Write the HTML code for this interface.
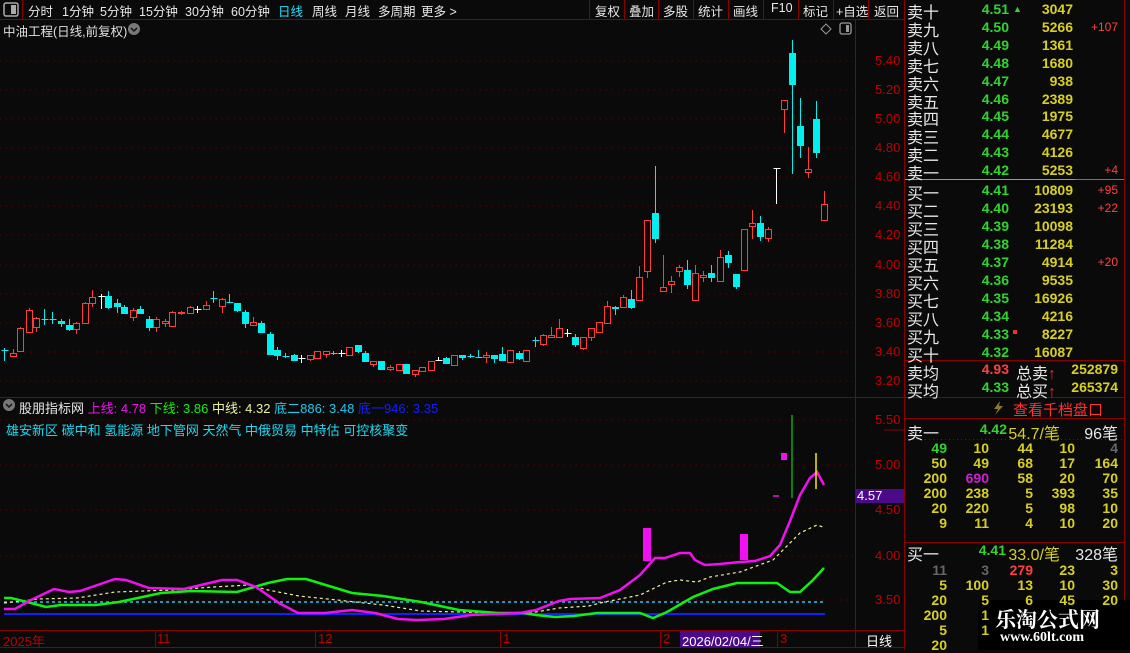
<!DOCTYPE html>
<html><head><meta charset="utf-8">
<style>
*{margin:0;padding:0;box-sizing:border-box}
body{width:1130px;height:650px;background:#0a0a0a;overflow:hidden;position:relative;font-family:"Liberation Sans","Noto Sans CJK SC",sans-serif;color:#ddd}
.a{position:absolute;white-space:nowrap}
.tb{font-size:12.5px;color:#e8e8e8;top:1px}
.bk{font-size:14px;font-weight:bold}
.lab{font-size:16px;color:#e8e8e8}
.g{color:#2fd52f}.y{color:#d8d020}.rd{color:#ff4040}.w{color:#e8e8e8}
.ch{font-size:12px;color:#ff4040}
</style></head><body>
<svg class="a" style="left:0;top:0" width="1130" height="650">
<g stroke="#8a0000" stroke-width="1" fill="none">
<line x1="0" y1="19.5" x2="904" y2="19.5"/>
<line x1="22.5" y1="0" x2="22.5" y2="19"/>
<line x1="589.5" y1="0" x2="589.5" y2="19"/><line x1="624.5" y1="0" x2="624.5" y2="19"/><line x1="658.5" y1="0" x2="658.5" y2="19"/><line x1="693.5" y1="0" x2="693.5" y2="19"/><line x1="728.5" y1="0" x2="728.5" y2="19"/><line x1="763.5" y1="0" x2="763.5" y2="19"/><line x1="798.5" y1="0" x2="798.5" y2="19"/><line x1="833.5" y1="0" x2="833.5" y2="19"/><line x1="868.5" y1="0" x2="868.5" y2="19"/>
<line x1="904.5" y1="0" x2="904.5" y2="650"/>
<line x1="855.5" y1="19" x2="855.5" y2="648"/>
<line x1="0" y1="397.5" x2="904" y2="397.5"/>
<line x1="0" y1="630.5" x2="904" y2="630.5"/>
<line x1="0" y1="647.5" x2="904" y2="647.5"/>
<line x1="1124.5" y1="0" x2="1124.5" y2="650"/>
<line x1="905" y1="360.5" x2="1124" y2="360.5"/>
<line x1="905" y1="397.5" x2="1124" y2="397.5"/>
<line x1="905" y1="418.5" x2="1124" y2="418.5"/>
<line x1="905" y1="542.5" x2="1124" y2="542.5"/>
<line x1="155.5" y1="631" x2="155.5" y2="647"/><line x1="315.5" y1="631" x2="315.5" y2="647"/><line x1="500.5" y1="631" x2="500.5" y2="647"/><line x1="660.5" y1="631" x2="660.5" y2="647"/><line x1="777.5" y1="631" x2="777.5" y2="647"/>
</g>
<line x1="905" y1="179.5" x2="1075" y2="179.5" stroke="#d09030"/>
<line x1="1075" y1="179.5" x2="1124" y2="179.5" stroke="#4080c0"/>
<g stroke="#6a0000" stroke-dasharray="1 5">
<line x1="0" y1="61" x2="855" y2="61"/><line x1="0" y1="90" x2="855" y2="90"/><line x1="0" y1="119" x2="855" y2="119"/><line x1="0" y1="148" x2="855" y2="148"/><line x1="0" y1="177" x2="855" y2="177"/><line x1="0" y1="206" x2="855" y2="206"/><line x1="0" y1="235" x2="855" y2="235"/><line x1="0" y1="265" x2="855" y2="265"/><line x1="0" y1="294" x2="855" y2="294"/><line x1="0" y1="323" x2="855" y2="323"/><line x1="0" y1="352" x2="855" y2="352"/><line x1="0" y1="381" x2="855" y2="381"/>
<line x1="0" y1="420" x2="855" y2="420"/><line x1="0" y1="465" x2="855" y2="465"/><line x1="0" y1="510" x2="855" y2="510"/><line x1="0" y1="556" x2="855" y2="556"/><line x1="0" y1="600" x2="855" y2="600"/>
</g>
<line x1="884" y1="430" x2="904" y2="430" stroke="#8a0000"/>
<g id="cd"></g>
<line x1="4" y1="614" x2="825" y2="614" stroke="#1020ff" stroke-width="2"/>
<line x1="4" y1="602" x2="825" y2="602" stroke="#20c8f0" stroke-width="1.5" stroke-dasharray="3 3"/>
<polyline fill="none" stroke="#f0f0a0" stroke-width="1.2" stroke-dasharray="3 3" points="4,603 38,599 77,598 115,592 172,590 214,587 249,585 268,590 299,596 337,600 383,605 421,611 498,613 536,612 559,608 589,606 600,603 640,595 667,582 680,580 697,582 710,577 740,572 773,560 800,533 817,525 823,527"/>
<polyline fill="none" stroke="#10f010" stroke-width="2.5" points="4,598 11,598 31,603 46,607 61,605 96,605 119,602 161,593 191,591 237,592 268,583 287,579 306,579 329,586 352,593 383,596 421,602 459,610 498,613 524,613 536,615 555,617 574,616 597,613 640,613 653,618 667,612 693,597 713,589 737,583 777,583 790,592 800,592 813,580 824,568"/>
<polyline fill="none" stroke="#f010f0" stroke-width="2.5" points="4,609 15,609 31,600 54,589 69,592 80,591 115,579 126,580 149,588 184,589 222,580 237,580 256,587 279,603 298,613 325,613 352,610 375,613 398,619 417,620 444,619 471,615 520,613 536,610 559,601 570,599 600,598 620,590 640,575 655,558 665,558 680,553 690,553 695,560 705,565 720,564 740,562 755,561 770,556 780,545 790,521 800,495 810,478 817,472 824,485"/>
<rect x="643" y="528" width="8" height="33" fill="#f010f0"/>
<rect x="740" y="534" width="8" height="26" fill="#f010f0"/>
<rect x="781" y="453" width="6" height="7" fill="#f010f0"/>
<line x1="773" y1="496" x2="779" y2="496" stroke="#f010f0" stroke-width="1.5"/>
<line x1="792" y1="415" x2="792" y2="498" stroke="#10f010"/>
<line x1="816" y1="453" x2="816" y2="489" stroke="#f0f000" stroke-width="1.5"/>
<rect x="856" y="489" width="48" height="14" fill="#4a0a8a"/>
<rect x="680" y="631" width="80" height="16" fill="#4a0a8a"/>
<rect x="4" y="3" width="14" height="13" rx="2" fill="none" stroke="#aaa" stroke-width="1.5"/><rect x="11" y="5" width="5" height="9" fill="#aaa"/>
<rect x="840" y="23" width="11" height="11" rx="2" fill="none" stroke="#999" stroke-width="1.3"/><rect x="846" y="25" width="3" height="7" fill="#999"/>
<path d="M826 24 L831 29 L826 34 L821 29 Z" fill="none" stroke="#999"/>
<circle cx="134" cy="29" r="6" fill="#777"/><path d="M131 28 L134 31 L137 28" stroke="#111" fill="none" stroke-width="1.5"/>
<circle cx="9" cy="405" r="6" fill="#777"/><path d="M6 404 L9 407 L12 404" stroke="#111" fill="none" stroke-width="1.5"/>
<path d="M1000 401 L994 409 L998 409 L995 415 L1003 406 L999 406 Z" fill="#8a7a30"/>
<line x1="905" y1="439.5" x2="1124" y2="439.5" stroke="#7a1010" stroke-dasharray="1 3"/>
<rect x="978" y="600" width="152" height="50" fill="#000"/>
</svg>

<div class="a tb" style="left:28px">分时</div><div class="a tb" style="left:62px">1分钟</div><div class="a tb" style="left:100px">5分钟</div><div class="a tb" style="left:139px">15分钟</div><div class="a tb" style="left:185px">30分钟</div><div class="a tb" style="left:231px">60分钟</div><div class="a tb" style="left:278px;color:#20e0ff">日线</div><div class="a tb" style="left:312px">周线</div><div class="a tb" style="left:345px">月线</div><div class="a tb" style="left:378px">多周期</div><div class="a tb" style="left:421px">更多 &gt;</div>
<div class="a tb" style="left:595px">复权</div><div class="a tb" style="left:629px">叠加</div><div class="a tb" style="left:663px">多股</div><div class="a tb" style="left:698px">统计</div><div class="a tb" style="left:733px">画线</div><div class="a tb" style="left:771px">F10</div><div class="a tb" style="left:803px">标记</div><div class="a tb" style="left:836px">+自选</div><div class="a tb" style="left:874px">返回</div>
<div class="a" style="left:3px;top:21px;font-size:12.5px;color:#e0e0e0">中油工程(日线,前复权)</div>

<div id="ax" class="a" style="left:875px;top:0;font-size:13px;color:#c00000"></div>
<div class="a" style="left:857px;top:488px;font-size:13px;color:#fff">4.57</div>

<div class="a" style="left:19px;top:398px;font-size:13px"><span class="w">股朋指标网</span> <span style="color:#f010f0">上线: 4.78</span> <span style="color:#10f010">下线: 3.86</span> <span style="color:#f0f0a0">中线: 4.32</span> <span style="color:#20c8f0">底二886: 3.48</span> <span style="color:#1020ff">底一946: 3.35</span></div>
<div class="a" style="left:6px;top:420px;font-size:13px;color:#20d8f0">雄安新区 碳中和 氢能源 地下管网 天然气 中俄贸易 中特估 可控核聚变</div>

<div class="a" style="left:3px;top:631px;font-size:13px;color:#c00000">2025年</div>
<div class="a" style="left:157px;top:631px;font-size:13px;color:#c00000">11</div>
<div class="a" style="left:318px;top:631px;font-size:13px;color:#c00000">12</div>
<div class="a" style="left:503px;top:631px;font-size:13px;color:#c00000">1</div>
<div class="a" style="left:663px;top:631px;font-size:13px;color:#c00000">2</div>
<div class="a" style="left:682px;top:631px;font-size:13px;color:#fff">2026/02/04/三</div>
<div class="a" style="left:780px;top:631px;font-size:13px;color:#c00000">3</div>
<div class="a" style="left:866px;top:631px;font-size:13px;color:#fff">日线</div>

<div id="bk"></div>
<div class="a" style="left:1013px;top:399px;font-size:15px;color:#ff3030">查看千档盘口</div>
<div class="a" style="left:995px;top:604px;font-size:21px;font-weight:bold;color:#fff;font-family:'Liberation Serif','Noto Serif CJK SC',serif">乐淘公式网</div>
<div class="a" style="left:1000px;top:630px;font-size:14px;font-weight:bold;color:#fff;font-family:'Liberation Serif',serif">www.60lt.com</div>

<script>
var ns="http://www.w3.org/2000/svg",cd=document.getElementById('cd');
function el(t,a){var e=document.createElementNS(ns,t);for(var k in a)e.setAttribute(k,a[k]);cd.appendChild(e);}
var A=[[4,350,350,348,361,'c'],[12,353,356,349,357,'r'],[19,328,351,327,351,'r'],[27,310,332,308,332,'r'],[34,318,327,317,332,'r'],[41,319,319,309,325,'c'],[49,319,319,312,324,'c'],[57,321,323,319,327,'c'],[64,325,329,319,331,'c'],[71,323,329,322,334,'r'],[79,303,323,302,323,'r'],[86,297,303,290,307,'r'],[94,296,296,294,309,'w'],[101,296,307,291,309,'c'],[109,303,306,299,313,'c'],[116,307,313,305,314,'c'],[124,310,317,308,321,'r'],[131,309,313,306,314,'c'],[139,319,327,316,331,'c'],[146,319,327,317,332,'r'],[154,321,323,319,327,'r'],[161,312,326,311,327,'r'],[169,312,313,311,315,'r'],[177,307,313,306,313,'r'],[184,309,309,306,313,'w'],[192,305,309,301,310,'r'],[199,298,298,291,303,'c'],[207,299,306,298,313,'r'],[214,302,302,294,303,'c'],[221,303,310,303,312,'c'],[229,312,323,310,328,'c'],[236,322,325,317,326,'r'],[244,323,332,321,333,'c'],[252,334,354,332,354,'c'],[259,350,355,347,360,'c'],[266,356,356,353,358,'c'],[274,355,360,354,360,'c'],[281,358,358,355,363,'w'],[289,355,359,355,361,'r'],[296,351,358,351,358,'r'],[304,351,354,351,358,'r'],[311,353,353,351,355,'c'],[318,353,353,350,357,'w'],[326,347,355,347,355,'r'],[334,345,351,345,353,'c'],[341,353,361,351,361,'c'],[348,361,364,361,367,'r'],[356,361,369,361,369,'c'],[364,367,369,365,371,'r'],[372,364,370,364,370,'r'],[379,364,373,364,374,'c'],[387,370,374,370,377,'r'],[394,367,371,367,371,'r'],[402,361,370,361,370,'r'],[409,360,360,357,361,'w'],[416,358,363,357,364,'c'],[424,355,365,355,365,'r'],[431,355,357,355,360,'c'],[439,356,356,354,358,'c'],[446,357,357,350,358,'c'],[454,355,357,352,363,'r'],[461,355,358,355,363,'c'],[469,354,360,347,361,'c'],[476,350,362,350,362,'r'],[484,353,358,351,360,'c'],[491,350,361,350,361,'r']];
A.forEach(function(c){c[0]=Math.round(c[0]*1.0714);});
var B=[[535,340,340,337,347,'c'],[543,335,344,334,346,'r'],[551,335,337,327,338,'r'],[559,328,337,319,337,'r'],[567,333,333,329,337,'w'],[575,337,344,334,347,'c'],[583,337,348,337,350,'r'],[591,328,337,328,341,'r'],[599,322,332,322,332,'r'],[607,306,323,301,323,'r'],[615,307,308,306,315,'c'],[623,297,307,295,307,'r'],[631,299,307,290,309,'c'],[639,277,300,266,300,'r'],[647,220,271,220,278,'r'],[655,213,238,166,243,'c'],[663,287,291,255,291,'r'],[671,281,284,276,293,'r'],[679,267,271,265,277,'r'],[687,270,284,260,289,'c'],[695,273,300,265,301,'r'],[703,275,277,271,282,'r'],[711,273,277,265,282,'c'],[720,257,281,250,281,'r'],[728,255,262,251,268,'c'],[736,274,286,274,289,'c'],[744,229,270,229,270,'r'],[752,223,226,210,239,'r'],[760,223,236,216,241,'c'],[768,229,238,227,242,'r'],[776,168,168,168,204,'w'],[784,100,109,100,133,'r'],[792,53,84,40,174,'c'],[800,126,145,98,158,'c'],[808,169,172,147,178,'r'],[816,119,152,101,158,'c'],[824,204,220,191,220,'r']];
A.concat(B).forEach(function(c){var x=c[0]+0.5,col=c[5]=='r'?'#ff3c3c':c[5]=='c'?'#00f0f0':'#fff';
el('line',{x1:x,y1:c[3],x2:x,y2:c[4],stroke:col});
if(c[1]==c[2]){el('line',{x1:x-3,y1:c[1]+.5,x2:x+4,y2:c[1]+.5,stroke:col});}
else if(c[5]=='r'){el('rect',{x:x-3,y:c[1]+.5,width:6,height:c[2]-c[1],fill:'#0a0a0a',stroke:col});}
else{el('rect',{x:x-3.5,y:c[1],width:7,height:c[2]-c[1]+1,fill:col});}});
var ax=document.getElementById('ax'),L=[['5.40',61],['5.20',90],['5.00',119],['4.80',148],['4.60',177],['4.40',206],['4.20',235],['4.00',265],['3.80',294],['3.60',323],['3.40',352],['3.20',381],['5.50',420],['5.00',465],['4.50',510],['4.00',556],['3.50',600]],h='';
L.forEach(function(l){h+='<div class="a" style="left:0;top:'+(l[1]-8)+'px">'+l[0]+'</div>';});ax.innerHTML=h;
var bk=document.getElementById('bk'),s='';
function t(x,y,txt,cls,right){s+='<div class="a '+cls+'" style="'+(right?'right:'+(1130-x):'left:'+x)+'px;top:'+y+'px">'+txt+'</div>';}
var sells=[['卖十','4.51','3047',''],['卖九','4.50','5266','+107'],['卖八','4.49','1361',''],['卖七','4.48','1680',''],['卖六','4.47','938',''],['卖五','4.46','2389',''],['卖四','4.45','1975',''],['卖三','4.44','4677',''],['卖二','4.43','4126',''],['卖一','4.42','5253','+4'],
['买一','4.41','10809','+95'],['买二','4.40','23193','+22'],['买三','4.39','10098',''],['买四','4.38','11284',''],['买五','4.37','4914','+20'],['买六','4.36','9535',''],['买七','4.35','16926',''],['买八','4.34','4216',''],['买九','4.33','8227',''],['买十','4.32','16087','']];
sells.forEach(function(r,i){var y=i<10?(i*17.9):(181+(i-10)*18);t(907,y-1,r[0],'lab');t(1009,y+1,r[1],'bk g',1);t(1073,y+1,r[2],'bk y',1);if(r[3])t(1118,y+2,r[3],'ch',1);});
s+='<div class="a" style="left:1013px;top:4px;color:#2fd52f;font-size:9px">▲</div><div class="a" style="left:1013px;top:330px;width:4px;height:4px;background:#f03030"></div>';
t(907,360,'卖均','lab');t(1009,361,'4.93','bk rd',1);t(1016,360,'总卖<span style="color:#ff2020">↑</span>','lab');t(1118,361,'252879','bk y',1);
t(907,378,'买均','lab');t(1009,379,'4.33','bk g',1);t(1016,378,'总买<span style="color:#ff2020">↑</span>','lab');t(1118,379,'265374','bk y',1);
t(907,420,'卖一','lab');t(1007,421,'4.42','bk g',1);t(1060,420,'54.7/笔','lab y',1);t(1118,420,'96笔','lab w',1);
t(907,541,'买一','lab');t(1006,542,'4.41','bk g',1);t(1060,541,'33.0/笔','lab y',1);t(1118,541,'328笔','lab w',1);
var R=[947,989,1033,1075,1118];
var D=[[['49','g'],['10','y'],['44','y'],['10','y'],['4','gr']],[['50'],['49'],['68'],['17'],['164']],[['200'],['690','m'],['58'],['20'],['70']],[['200'],['238'],['5'],['393'],['35']],[['20'],['220'],['5'],['98'],['10']],[['9'],['11'],['4'],['10'],['20']]];
var E=[[['11','gr'],['3','gr'],['279','rd'],['23'],['3']],[['5'],['100'],['13'],['10'],['30']],[['20'],['5'],['6'],['45'],['20']],[['200'],['1'],[''],[''],['']],[['5'],['1'],[''],[''],['']],[['20'],[''],[''],[''],['']]];
function rows(Dd,y0){Dd.forEach(function(r,i){r.forEach(function(c,j){var col=c[1]=='g'?'#2fd52f':c[1]=='m'?'#d020d0':c[1]=='gr'?'#666':c[1]=='rd'?'#ff4040':'#d8d020';s+='<div class="a bk" style="right:'+(1130-R[j])+'px;top:'+(y0+i*15)+'px;color:'+col+'">'+c[0]+'</div>';});});}
rows(D,440);rows(E,562);
bk.innerHTML=s;
</script>
</body></html>
